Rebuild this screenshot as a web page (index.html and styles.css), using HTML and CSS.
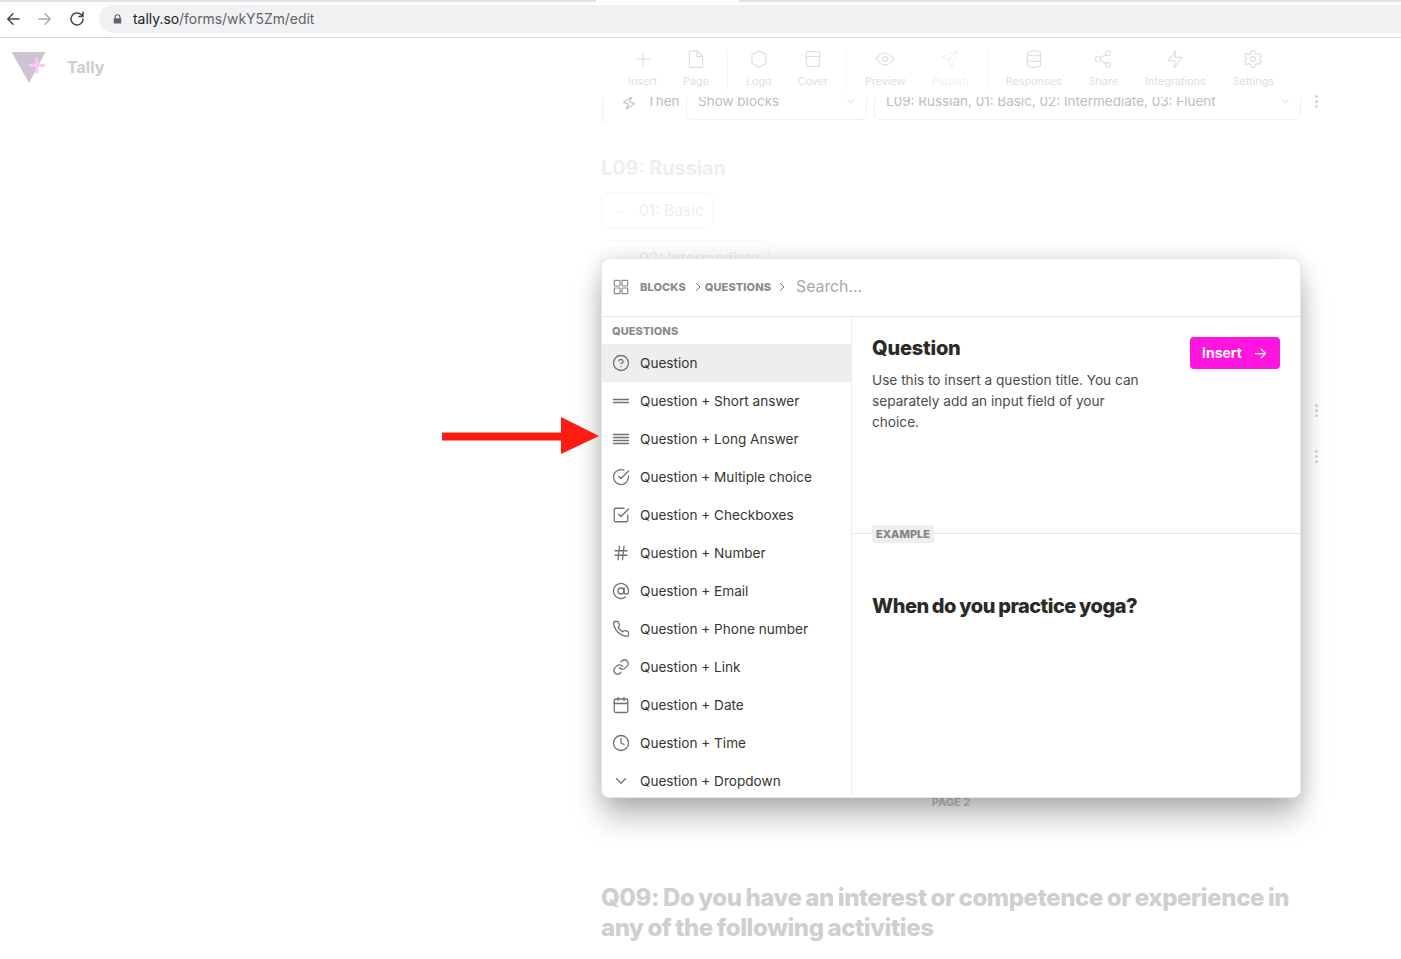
FILE: index.html
```html
<!DOCTYPE html>
<html lang="en">
<head>
    <meta charset="UTF-8">
    <meta name="viewport" content="width=device-width, initial-scale=1.0">
    <title>Tally - Edit form</title>
    <link rel="stylesheet" href="styles.css">
</head>
<body>

    <!-- browser chrome -->
    <div class="browser-bar">
        <div class="browser-tabs"><div class="browser-tab"></div></div>
        <div class="browser-row">
            <svg class="nav-icon" viewBox="0 0 24 24"><path d="M20 12H5M12 5l-7 7 7 7"/></svg>
            <svg class="nav-icon nav-off" viewBox="0 0 24 24"><path d="M4 12h15M12 5l7 7-7 7"/></svg>
            <svg class="nav-icon" viewBox="0 0 24 24"><path d="M20 12a8 8 0 1 1-2.500-5.800L20 8.500M20 3v5.500h-5.500"/></svg>
            <div class="address">
                <svg class="lock" viewBox="0 0 12 14"><path d="M2 6V4.500a4 4 0 0 1 8 0V6h1v7H1V6zM3.500 6h5V4.500a2.500 2.500 0 0 0-5 0z"/></svg>
                <span class="host">tally.so</span><span class="url-path">/forms/wkY5Zm/edit</span>
            </div>
        </div>
    </div>

    <header class="app-header">
        <div class="brand">
            <svg class="brand-logo" viewBox="0 0 36 34">
                <path d="M0 1h35L18 33z" fill="#cbc4d2"/>
                <path d="M26 8v14M19 15h14" stroke="#fbc9f7" stroke-width="3" fill="none"/>
            </svg>
            <span class="brand-name">Tally</span>
        </div>
        <nav class="toolbar">
            <div class="tool-group">
                <div class="tool"><svg viewBox="0 0 24 24"><path d="M12 4v16M4 12h16"/></svg>Insert</div>
                <div class="tool"><svg viewBox="0 0 24 24"><path d="M13 2H6a2 2 0 0 0-2 2v16a2 2 0 0 0 2 2h12a2 2 0 0 0 2-2V9zM13 2v7h7"/></svg>Page</div>
            </div>
            <div class="tool-group">
                <div class="tool"><svg viewBox="0 0 24 24"><path d="M12 2l8.500 5v10L12 22l-8.500-5V7z"/></svg>Logo</div>
                <div class="tool"><svg viewBox="0 0 24 24"><rect x="4" y="3" width="16" height="18" rx="2"/><path d="M4 9h16"/></svg>Cover</div>
            </div>
            <div class="tool-group">
                <div class="tool"><svg viewBox="0 0 24 24"><path d="M1.500 12S5.500 5 12 5s10.500 7 10.500 7-4 7-10.500 7S1.500 12 1.500 12z"/><circle cx="12" cy="12" r="3"/></svg>Preview</div>
                <div class="tool tool-off"><svg viewBox="0 0 24 24"><path d="M22 2L2 9.500l8 4 4 8.500zM22 2L10 13.500"/></svg>Publish</div>
            </div>
            <div class="tool-group tool-group-last">
                <div class="tool"><svg viewBox="0 0 24 24"><ellipse cx="12" cy="5" rx="8" ry="3"/><path d="M20 12c0 1.700-3.600 3-8 3s-8-1.300-8-3M4 5v14c0 1.700 3.600 3 8 3s8-1.300 8-3V5"/></svg>Responses</div>
                <div class="tool"><svg viewBox="0 0 24 24"><circle cx="18" cy="5" r="3"/><circle cx="6" cy="12" r="3"/><circle cx="18" cy="19" r="3"/><path d="M8.600 13.500l6.800 4M15.400 6.500l-6.800 4"/></svg>Share</div>
                <div class="tool"><svg viewBox="0 0 24 24"><path d="M13 2L4 14h8l-1 8 9-12h-8z"/></svg>Integrations</div>
                <div class="tool"><svg viewBox="0 0 24 24"><circle cx="12" cy="12" r="3"/><path d="M10 2h4l.6 3 2.600 1.500 2.900-1 2 3.500-2.300 2v2l2.300 2-2 3.500-2.900-1-2.600 1.500-.6 3h-4l-.6-3-2.600-1.500-2.900 1-2-3.500 2.300-2v-2L1.900 9l2-3.500 2.900 1L9.400 5z"/></svg>Settings</div>
            </div>
        </nav>
    </header>

    <!-- form editor, faded behind the command menu -->
    <main class="editor">
        <div class="rule-row">
            <svg class="rule-icon" viewBox="0 0 24 24"><path d="M13 2L4 14h8l-1 8 9-12h-8z"/></svg>
            <span class="rule-label">Then</span>
            <div class="rule-select rule-select-small">Show blocks<svg viewBox="0 0 24 24"><path d="M6 9l6 6 6-6"/></svg></div>
            <div class="rule-select rule-select-big">L09: Russian, 01: Basic, 02: Intermediate, 03: Fluent<svg viewBox="0 0 24 24"><path d="M6 9l6 6 6-6"/></svg></div>
            <div class="kebab kebab-rule"><i></i><i></i><i></i></div>
        </div>
        <h3 class="block-title">L09: Russian</h3>
        <div class="option"><svg viewBox="0 0 24 24"><path d="M6 9l6 6 6-6"/></svg>01: Basic</div>
        <div class="option"><svg viewBox="0 0 24 24"><path d="M6 9l6 6 6-6"/></svg>02: Intermediate</div>
        <div class="side-handles">
            <div class="handle"><div class="kebab"><i></i><i></i><i></i></div></div>
            <div class="handle"><div class="kebab"><i></i><i></i><i></i></div></div>
        </div>
        <div class="page-break"><span>PAGE 2</span></div>
        <h2 class="next-question">Q09: Do you have an interest or competence or experience in any of the following activities</h2>
    </main>

    <!-- command menu -->
    <section class="menu">
        <div class="menu-head">
            <svg class="crumb-icon" viewBox="0 0 24 24"><rect x="2" y="2" width="8.500" height="8.500" rx="1"/><rect x="13.500" y="2" width="8.500" height="8.500" rx="1"/><rect x="2" y="13.500" width="8.500" height="8.500" rx="1"/><rect x="13.500" y="13.500" width="8.500" height="8.500" rx="1"/></svg>
            <span class="crumb">BLOCKS</span>
            <svg class="crumb-sep" viewBox="0 0 24 24"><path d="M9 5l7 7-7 7"/></svg>
            <span class="crumb">QUESTIONS</span>
            <svg class="crumb-sep crumb-sep-last" viewBox="0 0 24 24"><path d="M9 5l7 7-7 7"/></svg>
            <span class="search">Search...</span>
        </div>
        <div class="menu-body">
            <div class="menu-list">
                <div class="list-title">QUESTIONS</div>
                <div class="list-item active"><svg viewBox="0 0 24 24"><circle cx="12" cy="12" r="10"/><path d="M9.100 9a3 3 0 0 1 5.800 1c0 2-3 3-3 3M12 17h.01"/></svg>Question</div>
                <div class="list-item"><svg viewBox="0 0 24 24"><path d="M2 10h20M2 14h20"/></svg>Question + Short answer</div>
                <div class="list-item"><svg viewBox="0 0 24 24"><path d="M2 6h20M2 10h20M2 14h20M2 18h20"/></svg>Question + Long Answer</div>
                <div class="list-item"><svg viewBox="0 0 24 24"><path d="M22 11v1a10 10 0 1 1-6-9.100M22 4L12 14l-3-3"/></svg>Question + Multiple choice</div>
                <div class="list-item"><svg viewBox="0 0 24 24"><path d="M9 11l3 3L22 4M21 12v7a2 2 0 0 1-2 2H5a2 2 0 0 1-2-2V5a2 2 0 0 1 2-2h11"/></svg>Question + Checkboxes</div>
                <div class="list-item"><svg viewBox="0 0 24 24"><path d="M4 9h16M4 15h16M10 3L8 21M16 3l-2 18"/></svg>Question + Number</div>
                <div class="list-item"><svg viewBox="0 0 24 24"><circle cx="12" cy="12" r="4"/><path d="M16 8v5a3 3 0 0 0 6 0v-1a10 10 0 1 0-3.900 7.900"/></svg>Question + Email</div>
                <div class="list-item"><svg viewBox="0 0 24 24"><path d="M22 16.900v3a2 2 0 0 1-2.200 2 19.800 19.800 0 0 1-8.600-3.100 19.500 19.500 0 0 1-6-6A19.800 19.800 0 0 1 2.100 4.200 2 2 0 0 1 4.100 2h3a2 2 0 0 1 2 1.700c.1 1 .4 1.900.7 2.800a2 2 0 0 1-.5 2.100L8.100 9.900a16 16 0 0 0 6 6l1.300-1.300a2 2 0 0 1 2.100-.4c.9.300 1.800.6 2.800.7a2 2 0 0 1 1.700 2z"/></svg>Question + Phone number</div>
                <div class="list-item"><svg viewBox="0 0 24 24"><path d="M10 13a5 5 0 0 0 7.500.5l3-3a5 5 0 0 0-7-7l-1.700 1.700M14 11a5 5 0 0 0-7.500-.5l-3 3a5 5 0 0 0 7 7l1.700-1.700"/></svg>Question + Link</div>
                <div class="list-item"><svg viewBox="0 0 24 24"><rect x="3" y="4" width="18" height="18" rx="2"/><path d="M16 2v4M8 2v4M3 10h18"/></svg>Question + Date</div>
                <div class="list-item"><svg viewBox="0 0 24 24"><circle cx="12" cy="12" r="10"/><path d="M12 6v6l4 2"/></svg>Question + Time</div>
                <div class="list-item"><svg viewBox="0 0 24 24"><path d="M6 9l6 6 6-6"/></svg>Question + Dropdown</div>
            </div>
            <div class="menu-detail">
                <div class="detail-top">
                    <div class="detail-text">
                        <h2>Question</h2>
                        <p>Use this to insert a question title. You can separately add an input field of your choice.</p>
                    </div>
                    <button type="button" class="insert-btn">Insert<svg viewBox="0 0 24 24"><path d="M4 12h16M13 5l7 7-7 7"/></svg></button>
                </div>
                <div class="example-bar"><span>EXAMPLE</span></div>
                <h2 class="example-title">When do you practice yoga?</h2>
            </div>
        </div>
    </section>

    <!-- annotation arrow -->
    <svg class="red-arrow" viewBox="0 0 157 38"><path d="M0 15.500h119V0l38 19-38 18V23.500H0z"/></svg>

</body>
</html>
```

FILE: styles.css
```css
* {
    box-sizing: border-box;
}
body {
    font-family: "Inter", "Liberation Sans", sans-serif;
    margin: 0;
    width: 1401px;
    height: 959px;
    overflow: hidden;
    position: relative;
    background-color: white;
}
h2, h3, p {
    margin: 0;
}
svg {
    fill: none;
    stroke: currentColor;
    stroke-width: 1.5;
    stroke-linecap: round;
    stroke-linejoin: round;
    flex-shrink: 0;
}

/* browser bar */
.browser-bar {
    height: 38px;
    border-bottom: 1px solid #d8d9db;
    background: white;
}
.browser-tabs {
    height: 2px;
    background: #dfe1e5;
    padding-left: 596px;
}
.browser-tab {
    width: 143px;
    height: 2px;
    background: white;
}
.browser-row {
    display: flex;
    align-items: center;
    height: 35px;
    padding-left: 4px;
    padding-bottom: 1px;
}
.nav-icon {
    width: 18px;
    height: 18px;
    margin-right: 14px;
    color: #45474a;
    stroke-width: 2;
}
.nav-off {
    color: #a9abae;
}
.address {
    display: flex;
    align-items: center;
    flex: 1;
    height: 28px;
    margin-left: -1px;
    padding-left: 14px;
    background: #f0f1f3;
    border-radius: 14px 0 0 14px;
    font-size: 13.900px;
}
.lock {
    width: 9px;
    height: 12px;
    margin-right: 11px;
    fill: #5f6368;
    stroke: none;
}
.host {
    color: #202124;
}
.url-path {
    color: #5f6368;
}

/* app header */
.app-header {
    display: flex;
    justify-content: space-between;
    height: 59px;
    background: white;
}
.brand {
    display: flex;
    align-items: center;
    padding: 0 0 2px 11px;
    height: 59px;
}
.brand-logo {
    width: 36px;
    height: 33px;
    stroke: none;
    margin-top: 2px;
}
.brand-name {
    margin-left: 20px;
    font-size: 16px;
    font-weight: 700;
    color: #cdcdcd;
}
.toolbar {
    display: flex;
    padding: 11px 109px 0 0;
}
.tool-group {
    display: flex;
    gap: 26px;
    height: 41px;
    padding: 0 18px;
    border-right: 1px solid #f6f6f6;
}
.tool-group-last {
    gap: 27px;
    border-right: none;
}
.tool {
    display: flex;
    flex-direction: column;
    align-items: center;
    gap: 6px;
    font-size: 10.800px;
    color: #dedede;
}
.tool svg {
    width: 20px;
    height: 20px;
    color: #dcdcdc;
    stroke-width: 1.300;
}
.tool-off, .tool-off svg {
    color: #efefef;
}

/* editor behind the menu */
.editor {
    position: relative;
    margin-left: 601px;
    width: 700px;
}
.rule-row {
    display: flex;
    align-items: flex-end;
    height: 26px;
    padding-left: 17px;
    overflow: hidden;
    border-left: 3px solid #f8f8f8;
    font-size: 13.500px;
    color: #bdbdbd;
}
.rule-icon {
    width: 16px;
    height: 16px;
    margin: 0 10px 12px 0;
    transform: rotate(20deg);
}
.rule-label {
    width: 39px;
    flex-shrink: 0;
    line-height: 30px;
    margin-bottom: 7px;
}
.rule-select {
    display: flex;
    align-items: center;
    justify-content: space-between;
    height: 38px;
    margin-right: 7px;
    padding: 0 8px 0 11px;
    border: 1px solid #f0f0f0;
    border-radius: 6px;
    flex-shrink: 0;
}
.rule-select svg {
    width: 14px;
    height: 14px;
    color: #cfcfcf;
}
.rule-select-small {
    width: 181px;
    margin-bottom: 3px;
}
.rule-select-big {
    width: 427px;
    margin-bottom: 3px;
}
.kebab {
    display: flex;
    flex-direction: column;
    gap: 2px;
}
.kebab i {
    width: 3px;
    height: 3px;
    border-radius: 50%;
    background: #d5d5d5;
}
.kebab-rule {
    position: absolute;
    left: 714px;
    top: -2px;
}
.block-title {
    margin: 33px 0 12px;
    font-size: 19.700px;
    line-height: 24px;
    font-weight: 700;
    color: #eeeeee;
}
.option {
    display: flex;
    align-items: center;
    gap: 11px;
    width: max-content;
    height: 37px;
    margin-bottom: 11px;
    padding: 0 8px 0 12px;
    border: 1px solid #f8f8f8;
    border-radius: 6px;
    font-size: 15.600px;
    color: #eeeeee;
}
.option svg {
    width: 14px;
    height: 14px;
}
.side-handles {
    position: absolute;
    left: 699px;
    top: 298px;
    display: flex;
    flex-direction: column;
    gap: 16px;
}
.handle {
    display: flex;
    align-items: center;
    width: 18px;
    height: 30px;
    padding-left: 14px;
    border-left: 1px solid #eeeeee;
}
.page-break {
    position: absolute;
    left: 0;
    top: 697px;
    width: 700px;
    height: 16px;
    text-align: center;
    font-size: 11px;
    font-weight: 700;
    line-height: 16px;
    color: #c9c9c9;
}
.next-question {
    position: absolute;
    left: 0;
    top: 786px;
    width: 700px;
    font-size: 24px;
    line-height: 30px;
    font-weight: 800;
    letter-spacing: -0.4px;
    word-spacing: -1px;
    color: #cfcfcf;
}

/* command menu */
.menu {
    position: absolute;
    left: 601px;
    top: 258px;
    width: 700px;
    height: 540px;
    display: flex;
    flex-direction: column;
    background: white;
    border: 1px solid #e6e6e6;
    border-radius: 8px;
    overflow: hidden;
    box-shadow: 0 20px 30px -2px rgba(0, 0, 0, 0.28), 0 0 20px rgba(0, 0, 0, 0.12);
}
.menu-head {
    display: flex;
    align-items: center;
    height: 58px;
    padding: 0 0 2px 11px;
    border-bottom: 1px solid #e8e8e8;
    flex-shrink: 0;
}
.crumb-icon {
    width: 16px;
    height: 16px;
    margin-right: 11px;
    color: #8a8a8a;
    stroke-width: 1.800;
}
.crumb {
    font-size: 11px;
    font-weight: 800;
    letter-spacing: 0.1px;
    color: #8b8b8b;
}
.crumb-sep {
    width: 12px;
    height: 12px;
    margin: 0 1px 0 6px;
    color: #777777;
    stroke-width: 2;
}
.crumb-sep-last {
    margin: 0 8px 0 5px;
}
.search {
    font-size: 15.800px;
    color: #a8a8a8;
}
.menu-body {
    display: flex;
    flex: 1;
    min-height: 0;
}
.menu-list {
    width: 250px;
    border-right: 1px solid #ececec;
    flex-shrink: 0;
}
.list-title {
    height: 27px;
    padding: 8px 0 0 10px;
    font-size: 11px;
    font-weight: 800;
    letter-spacing: 0.1px;
    line-height: 13px;
    color: #8b8b8b;
}
.list-item {
    display: flex;
    align-items: center;
    gap: 10px;
    height: 38px;
    padding-left: 10px;
    font-size: 13.600px;
    color: #37352f;
}
.list-item svg {
    width: 18px;
    height: 18px;
    color: #717171;
    stroke-width: 1.700;
}
.active {
    background-color: #eeeeee;
}
.menu-detail {
    flex: 1;
}
.detail-top {
    display: flex;
    justify-content: space-between;
    height: 208px;
    padding: 20px 20px 0;
}
.detail-text {
    width: 276px;
}
.detail-text h2 {
    font-size: 20px;
    line-height: 22px;
    font-weight: 800;
    letter-spacing: -0.2px;
    color: #2b2a26;
}
.detail-text p {
    margin-top: 11px;
    font-size: 13.650px;
    line-height: 21px;
    color: #4b4b4b;
}
.insert-btn {
    display: flex;
    align-items: center;
    gap: 11px;
    width: 90px;
    height: 32px;
    padding: 0 12px 2px;
    border: none;
    border-radius: 4px;
    background-color: #ff14e0;
    color: white;
    font-family: inherit;
    font-size: 14px;
    font-weight: 700;
}
.insert-btn svg {
    width: 15px;
    height: 15px;
    margin-top: 2px;
    stroke-width: 2;
}
.example-bar {
    height: 18px;
    padding-left: 20px;
    background: linear-gradient(#e8e8e8, #e8e8e8) 0 8px / 100% 1px no-repeat;
}
.example-bar span {
    display: block;
    width: 62px;
    height: 18px;
    background: #eeeeee;
    border-radius: 3px;
    text-align: center;
    font-size: 11px;
    line-height: 18px;
    font-weight: 800;
    color: #858585;
}
.example-title {
    margin: 51px 0 0 20px;
    font-size: 20px;
    line-height: 24px;
    font-weight: 800;
    letter-spacing: -0.5px;
    word-spacing: -0.6px;
    color: #2b2a26;
}

.red-arrow {
    position: absolute;
    left: 442px;
    top: 417px;
    width: 157px;
    height: 38px;
    fill: #fc1c12;
    stroke: none;
}
```
